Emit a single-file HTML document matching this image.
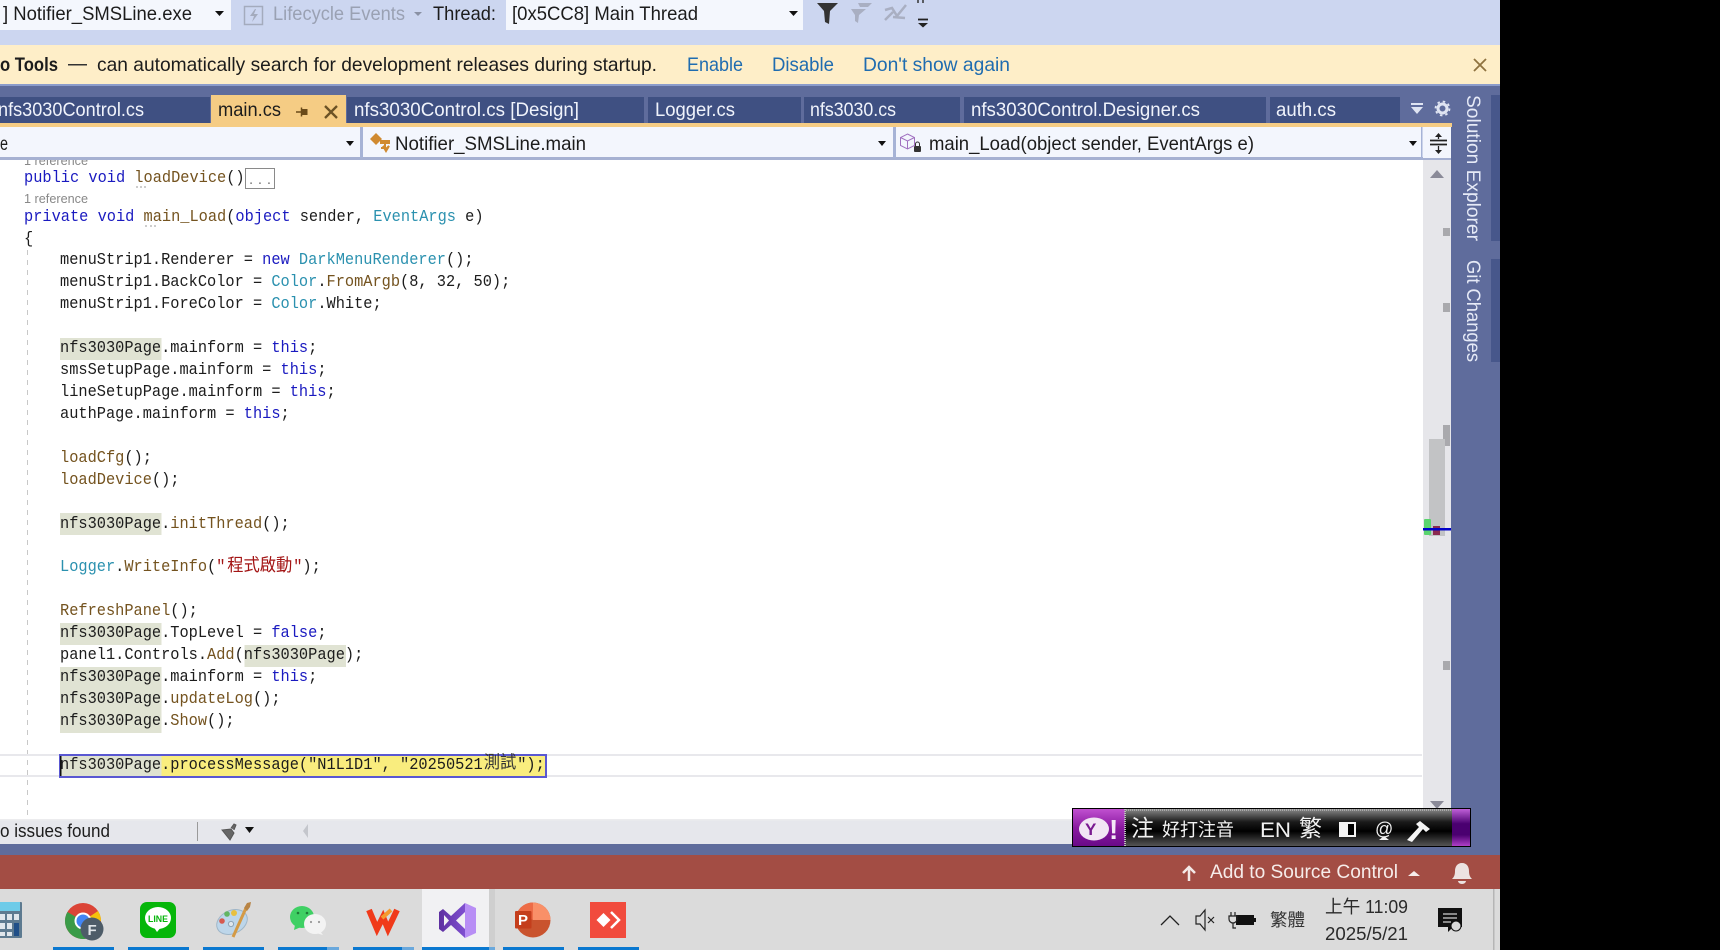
<!DOCTYPE html>
<html><head><meta charset="utf-8"><title>Visual Studio</title>
<style>
html,body{margin:0;padding:0;background:#000;width:1720px;height:950px;overflow:hidden}
svg{display:block}
text{font-family:"Liberation Sans","Noto Sans CJK TC",sans-serif;white-space:pre}
.ui{font-size:19.5px;fill:#1c1c1c}
.tab{font-size:19.5px;fill:#f0f3fb}
.c{fill:#1c1c1c}
.c text{font-family:"Liberation Mono","Noto Sans CJK TC",monospace;font-size:16.5px}
.c .cjk{font-family:"Noto Sans CJK TC",sans-serif;font-size:17.5px}
.k{fill:#1a1ac0}.m{fill:#74531f}.t{fill:#2b91af}.s{fill:#a31515}.d{fill:#1c1c1c}
.lnk{font-size:19.5px;fill:#1f6cb0}
</style></head><body>
<svg width="1720" height="950" viewBox="0 0 1720 950" xmlns="http://www.w3.org/2000/svg">
<defs>
<linearGradient id="bar" x1="0" y1="0" x2="0" y2="1"><stop offset="0" stop-color="#8a8a8a"/><stop offset=".35" stop-color="#1a1a1a"/><stop offset=".6" stop-color="#000"/><stop offset="1" stop-color="#555"/></linearGradient>
<linearGradient id="pur" x1="0" y1="0" x2="0" y2="1"><stop offset="0" stop-color="#c050d0"/><stop offset=".5" stop-color="#8a1aa0"/><stop offset="1" stop-color="#6a0a88"/></linearGradient>
<linearGradient id="pur2" x1="0" y1="0" x2="0" y2="1"><stop offset="0" stop-color="#c060d8"/><stop offset=".4" stop-color="#4a0070"/><stop offset=".7" stop-color="#4a0070"/><stop offset="1" stop-color="#b040c8"/></linearGradient>
<linearGradient id="vs" gradientUnits="userSpaceOnUse" x1="439" y1="0" x2="476" y2="0"><stop offset="0" stop-color="#5d2fa0"/><stop offset=".7" stop-color="#7f4fd0"/><stop offset=".7" stop-color="#b88ef5"/><stop offset="1" stop-color="#b88ef5"/></linearGradient>
</defs>
<rect width="1720" height="950" fill="#000"/>

<!-- editor -->
<rect x="0" y="150" width="1423" height="670" fill="#fff"/>
<text x="24" y="165" font-size="12.5" fill="#888" textLength="64" lengthAdjust="spacingAndGlyphs">1 reference</text>
<text x="24" y="203" font-size="12.5" fill="#888" textLength="64" lengthAdjust="spacingAndGlyphs">1 reference</text>
<line x1="27.5" y1="250" x2="27.5" y2="815" stroke="#c8c8c8" stroke-width="1" stroke-dasharray="5 5"/>
<rect x="0" y="754" width="1422" height="2" fill="#e8e8ec"/>
<rect x="0" y="775" width="1422" height="2" fill="#e8e8ec"/>
<!-- highlights -->
<g fill="#e0e3d3">
<rect x="60" y="338" width="101.5" height="22"/>
<rect x="60" y="513" width="101.5" height="22"/>
<rect x="60" y="623" width="101.5" height="22"/>
<rect x="244.500" y="645" width="101.5" height="22"/>
<rect x="60" y="667" width="101.5" height="66"/>
</g>
<rect x="161" y="755" width="385" height="22" fill="#f9ed7e"/>
<rect x="60" y="755" width="101.500" height="22" fill="#dfe2d0"/>
<rect x="60" y="755" width="486" height="22" fill="none" stroke="#5a58d2" stroke-width="2"/>
<rect x="60" y="756" width="1.5" height="20" fill="#111"/>
<!-- collapsed box -->
<rect x="245.500" y="168.500" width="29" height="20" fill="#fff" stroke="#8a8a8a"/>
<text x="249" y="184" font-family="Liberation Mono" font-size="15" fill="#777" textLength="22">...</text>
<g fill="#aaa"><circle cx="137" cy="187" r=".9"/><circle cx="141" cy="187" r=".9"/><circle cx="145" cy="187" r=".9"/><circle cx="146" cy="226" r=".9"/><circle cx="151" cy="226" r=".9"/><circle cx="155" cy="226" r=".9"/></g>

<!-- code -->
<g class="c" transform="translate(60,-1) scale(.9293,1)">
<text x="-38.7" y="183"><tspan class="k">public void </tspan><tspan class="m">loadDevice</tspan>()</text>
<text x="-38.7" y="222"><tspan class="k">private void </tspan><tspan class="m">main_Load</tspan>(<tspan class="k">object</tspan> sender, <tspan class="t">EventArgs</tspan> e)</text>
<text x="-38.7" y="244">{</text>
<text x="0" y="265">menuStrip1.Renderer = <tspan class="k">new</tspan> <tspan class="t">DarkMenuRenderer</tspan>();</text>
<text x="0" y="287">menuStrip1.BackColor = <tspan class="t">Color</tspan>.<tspan class="m">FromArgb</tspan>(8, 32, 50);</text>
<text x="0" y="309">menuStrip1.ForeColor = <tspan class="t">Color</tspan>.White;</text>
<text x="0" y="353">nfs3030Page.mainform = <tspan class="k">this</tspan>;</text>
<text x="0" y="375">smsSetupPage.mainform = <tspan class="k">this</tspan>;</text>
<text x="0" y="397">lineSetupPage.mainform = <tspan class="k">this</tspan>;</text>
<text x="0" y="419">authPage.mainform = <tspan class="k">this</tspan>;</text>
<text x="0" y="463"><tspan class="m">loadCfg</tspan>();</text>
<text x="0" y="485"><tspan class="m">loadDevice</tspan>();</text>
<text x="0" y="529">nfs3030Page.<tspan class="m">initThread</tspan>();</text>
<text x="0" y="572"><tspan class="t">Logger</tspan>.<tspan class="m">WriteInfo</tspan>(<tspan class="s">"</tspan></text>
<text x="180" y="572" class="cjk s">程式啟動</text>
<text x="251" y="572"><tspan class="s">"</tspan>);</text>
<text x="0" y="616"><tspan class="m">RefreshPanel</tspan>();</text>
<text x="0" y="638">nfs3030Page.TopLevel = <tspan class="k">false</tspan>;</text>
<text x="0" y="660">panel1.Controls.<tspan class="m">Add</tspan>(nfs3030Page);</text>
<text x="0" y="682">nfs3030Page.mainform = <tspan class="k">this</tspan>;</text>
<text x="0" y="704">nfs3030Page.<tspan class="m">updateLog</tspan>();</text>
<text x="0" y="726">nfs3030Page.<tspan class="m">Show</tspan>();</text>
<text x="0" y="770">nfs3030Page.processMessage("N1L1D1", "20250521</text>
<text x="456" y="769" class="cjk" fill="#333">測試</text>
<text x="492" y="770">");</text>
</g>

<!-- scrollbar -->
<rect x="1423" y="160" width="28" height="660" fill="#e6e6ea"/>
<path d="M1430 178 L1437 170 L1444 178Z" fill="#8a8a98"/>
<path d="M1430 801 L1437 809 L1444 801Z" fill="#8a8a98"/>
<g fill="#a9a9ad">
<rect x="1443" y="228" width="7" height="8"/>
<rect x="1443" y="303" width="7" height="9"/>
<rect x="1443" y="425" width="7" height="21"/>
<rect x="1443" y="661" width="7" height="9"/>
</g>
<rect x="1429" y="439" width="16" height="97" fill="#c2c3c5"/>
<rect x="1424" y="519" width="7" height="16" rx="1" fill="#5ad46e"/>
<rect x="1433" y="526" width="7" height="9" fill="#8b2a50"/>
<rect x="1423" y="528" width="28" height="2.500" fill="#0000c8"/>

<!-- right panel -->
<rect x="1451" y="84" width="49" height="805" fill="#5f6c9c"/>
<rect x="1491" y="95" width="9" height="146" fill="#47578b"/>
<rect x="1491" y="259" width="9" height="103" fill="#47578b"/>
<text transform="translate(1467,95) rotate(90)" font-size="19" fill="#e6eaf7" textLength="146" lengthAdjust="spacingAndGlyphs">Solution Explorer</text>
<text transform="translate(1467,260) rotate(90)" font-size="19" fill="#e6eaf7" textLength="102" lengthAdjust="spacingAndGlyphs">Git Changes</text>

<!-- toolbar -->
<rect x="0" y="0" width="1500" height="45" fill="#ccd6f0"/>
<rect x="0" y="0" width="231" height="30" fill="#f4f7fd"/>
<text class="ui" x="3" y="20" textLength="189" lengthAdjust="spacingAndGlyphs">] Notifier_SMSLine.exe</text>
<path d="M215 11h9l-4.500 5z" fill="#111"/>
<rect x="244.500" y="6.500" width="18" height="18" fill="none" stroke="#a4abbd" stroke-width="1.500"/>
<path d="M255 9l-5 7h4l-2 6 6-8h-4l2-5z" fill="#a4abbd"/>
<text class="ui" x="273" y="20" style="fill:#9aa1b3" textLength="132" lengthAdjust="spacingAndGlyphs">Lifecycle Events</text>
<path d="M414 12h8l-4 4z" fill="#8a91a4"/>
<text class="ui" x="433" y="20" textLength="63" lengthAdjust="spacingAndGlyphs">Thread:</text>
<rect x="506" y="0" width="297" height="30" fill="#f4f7fd"/>
<text class="ui" x="512" y="20" textLength="186" lengthAdjust="spacingAndGlyphs">[0x5CC8] Main Thread</text>
<path d="M789 11h9l-4.500 5z" fill="#111"/>
<path d="M817 3H838L830 11 829 24 825 22 824 11Z" fill="#333"/>
<path d="M851 9H866L859 15 858 23 855 21 855 15ZM858 3H872L868 7H860Z" fill="#a9afc2"/>
<path d="M885 10L892 8 897 16 906 5M885 20L893 12M893 17L905 18" fill="none" stroke="#a9afc2" stroke-width="2.500"/>
<path d="M918 0v3M923 0v3" stroke="#333" stroke-width="1.500"/>
<path d="M918 19.500h10" stroke="#222" stroke-width="1.800"/><path d="M918 23h10l-5 4.500z" fill="#222"/>

<!-- info banner -->
<rect x="0" y="45" width="1500" height="39" fill="#feeec8"/>
<text x="0" y="71" font-size="19.500" font-weight="bold" fill="#1c1c1c" textLength="58" lengthAdjust="spacingAndGlyphs">o Tools</text>
<rect x="68" y="64" width="19" height="1.500" fill="#333"/>
<text class="ui" x="97" y="71" textLength="560" lengthAdjust="spacingAndGlyphs">can automatically search for development releases during startup.</text>
<text class="lnk" x="687" y="71" textLength="56" lengthAdjust="spacingAndGlyphs">Enable</text>
<text class="lnk" x="772" y="71" textLength="62" lengthAdjust="spacingAndGlyphs">Disable</text>
<text class="lnk" x="863" y="71" textLength="147" lengthAdjust="spacingAndGlyphs">Don't show again</text>
<path d="M1474 59l12 12M1486 59l-12 12" stroke="#8f7340" stroke-width="1.800"/>

<!-- tabs -->
<rect x="0" y="84" width="1451" height="43" fill="#5f6c9c"/>
<rect x="0" y="84" width="1500" height="2" fill="#8c9ccb"/>
<g fill="#3f5082">
<rect x="0" y="97" width="210" height="26"/>
<rect x="347" y="97" width="297" height="26"/>
<rect x="648" y="97" width="153" height="26"/>
<rect x="804" y="97" width="156" height="26"/>
<rect x="964" y="97" width="302" height="26"/>
<rect x="1270" y="97" width="130" height="26"/>
</g>
<rect x="0" y="123" width="1452" height="4" fill="#f5cc84"/>
<rect x="211" y="95" width="135" height="32" fill="#f5cc84"/>
<text class="ui" x="218" y="116" textLength="63" lengthAdjust="spacingAndGlyphs">main.cs</text>
<text class="tab" x="-2" y="116" textLength="146" lengthAdjust="spacingAndGlyphs">nfs3030Control.cs</text>
<path d="M296 112h6M301.500 107.500v9" fill="none" stroke="#6a4a18" stroke-width="1.500"/>
<rect x="302" y="109" width="5.500" height="6" fill="#6a4a18"/>
<path d="M325 106l12 12M337 106l-12 12" stroke="#6b5225" stroke-width="2.300"/>
<text class="tab" x="354" y="116" textLength="225" lengthAdjust="spacingAndGlyphs">nfs3030Control.cs [Design]</text>
<text class="tab" x="655" y="116" textLength="80" lengthAdjust="spacingAndGlyphs">Logger.cs</text>
<text class="tab" x="810" y="116" textLength="86" lengthAdjust="spacingAndGlyphs">nfs3030.cs</text>
<text class="tab" x="971" y="116" textLength="229" lengthAdjust="spacingAndGlyphs">nfs3030Control.Designer.cs</text>
<text class="tab" x="1276" y="116" textLength="60" lengthAdjust="spacingAndGlyphs">auth.cs</text>
<path d="M1411 103h12v2h-12zM1411 107h12l-6 7z" fill="#dfe4f2"/>
<circle cx="1442.500" cy="108.500" r="4.500" fill="none" stroke="#dfe4f2" stroke-width="3"/>
<circle cx="1442.500" cy="108.500" r="7" fill="none" stroke="#dfe4f2" stroke-width="1.800" stroke-dasharray="2.500 3"/>

<!-- nav bars -->
<rect x="0" y="127" width="1423" height="30" fill="#f3f6fd"/>
<rect x="1423" y="127" width="28" height="33" fill="#f3f6fd"/>
<rect x="0" y="157" width="1423" height="3" fill="#a6b1d2"/>
<rect x="1423" y="158" width="28" height="2" fill="#a6b1d2"/>
<rect x="360" y="127" width="3" height="31" fill="#a6b3d6"/>
<rect x="893" y="127" width="3" height="31" fill="#a6b3d6"/>
<rect x="1421" y="127" width="1.500" height="33" fill="#a6b3d6"/>
<text class="ui" x="0" y="150" textLength="8" lengthAdjust="spacingAndGlyphs">e</text>
<path d="M346 141h8l-4 5z" fill="#111"/>
<path d="M878 141h8l-4 5z" fill="#111"/>
<path d="M1409 141h8l-4 5z" fill="#111"/>
<path d="M376 133l-6 6 6 6 6-6z" fill="#d08a30"/>
<path d="M381 141h8v2h-8zM385 143v5h-4M383 146l3 3 3-3 -3 5z" fill="none" stroke="#d08a30" stroke-width="2"/>
<text class="ui" x="395" y="150" textLength="191" lengthAdjust="spacingAndGlyphs">Notifier_SMSLine.main</text>
<path d="M907.500 134l7 3.500v8l-7 3.500-7-3.500v-8zM900.500 137.500l7 3.500 7-3.500M907.500 141v8" fill="none" stroke="#a070c0" stroke-width="1"/>
<rect x="914" y="146" width="7" height="6" rx="1" fill="#333"/>
<path d="M915.500 146v-2a2 2 0 0 1 4 0v2" fill="none" stroke="#333" stroke-width="1"/>
<text class="ui" x="929" y="150" textLength="325" lengthAdjust="spacingAndGlyphs">main_Load(object sender, EventArgs e)</text>
<path d="M1430 140.500h17M1430 144.500h17" stroke="#222" stroke-width="1.800"/>
<path d="M1438.500 135v4M1438.500 146v5" stroke="#222" stroke-width="1.300"/>
<path d="M1435 137l3.500-4 3.500 4zM1435 150l3.500 4 3.500-4z" fill="#222"/>

<!-- status bar -->
<rect x="0" y="819" width="1451" height="25" fill="#e6e7ec"/>
<rect x="0" y="819" width="1423" height="1.500" fill="#ececee"/>
<text class="ui" x="0" y="837" style="font-size:18.500px" textLength="110" lengthAdjust="spacingAndGlyphs">o issues found</text>
<rect x="197" y="822" width="1" height="19" fill="#9a9a9a"/>
<path d="M222 830l8 10 4-7-3-4zM231 828l3-4 2 1-2 5" fill="#666" stroke="#555"/>
<path d="M245 827h9l-4.500 6z" fill="#111"/>
<path d="M308 824v14l-5-7z" fill="#c4c6cc"/>
<rect x="0" y="844" width="1500" height="12" fill="#5f6c9c"/>
<rect x="0" y="855" width="1500" height="34" fill="#a34d44"/>
<path d="M1189 881v-13M1183 873l6-6 6 6" fill="none" stroke="#f3e9e7" stroke-width="2.500"/>
<text x="1210" y="878" font-size="19.500" fill="#f6ecea" textLength="188" lengthAdjust="spacingAndGlyphs">Add to Source Control</text>
<path d="M1408 876l6-5 6 5z" fill="#f6ecea"/>
<path d="M1462 863c-5 0-7 4-7 8 0 4-1 6-3 8h20c-2-2-3-4-3-8 0-4-2-8-7-8zM1458 881h8a4 3 0 0 1-8 0z" fill="#ece3e1"/>

<!-- Yahoo bar -->
<rect x="1072" y="808" width="399" height="39" fill="#000"/>
<rect x="1073" y="809" width="397" height="37" fill="url(#bar)"/>
<path d="M1126 810H1451" stroke="#aaa" stroke-width="2" stroke-dasharray="1 1"/>
<rect x="1073" y="809" width="52" height="37" fill="url(#pur)"/>
<path d="M1125 809V846" stroke="#bbb" stroke-width="2" stroke-dasharray="1 1"/>
<ellipse cx="1094" cy="829" rx="15" ry="11.500" fill="#f2e6f4"/>
<text x="1085" y="835" font-family="Liberation Serif" font-weight="bold" font-size="17" fill="#7a1a90">Y</text>
<text x="1109" y="839" font-family="Liberation Serif" font-weight="bold" font-size="28" fill="#f4e8f6">!</text>
<rect x="1452" y="809" width="18" height="37" fill="url(#pur2)"/>
<text x="1131" y="836" font-size="23" fill="#f2f2f2">注</text>
<text x="1162" y="836" font-size="18" fill="#f2f2f2" textLength="72">好打注音</text>
<text x="1260" y="837" font-size="21" fill="#f2f2f2" textLength="31" lengthAdjust="spacingAndGlyphs">EN</text>
<text x="1299" y="836" font-size="23" fill="#f2f2f2">繁</text>
<rect x="1339" y="822" width="17" height="15" fill="#f5f5f5"/><rect x="1348" y="824" width="6" height="11" fill="#000"/>
<text x="1375" y="835" font-size="18" fill="#f2f2f2">@</text>
<path d="M1379 840h10l-5-4z" fill="#f2f2f2"/>
<path d="M1407 840l12-13-3-3 4-3 10 8-4 3-3-3-11 13z" fill="#f5f5f5"/>

<!-- taskbar -->
<rect x="0" y="889" width="1500" height="61" fill="#dbdbdb"/>
<rect x="1493" y="889" width="1.500" height="61" fill="#b5b5b5"/>
<rect x="422" y="889" width="67" height="61" fill="#f1f1f3"/>
<rect x="489" y="889" width="6" height="61" fill="#cfcfcf"/>
<g fill="#0a78d0">
<rect x="53" y="947" width="61" height="3"/>
<rect x="128" y="947" width="61" height="3"/>
<rect x="203" y="947" width="61" height="3"/>
<rect x="278" y="947" width="49" height="3"/><rect x="327" y="947" width="12" height="3" fill="#6aa8dc"/>
<rect x="353" y="947" width="49" height="3"/><rect x="402" y="947" width="12" height="3" fill="#6aa8dc"/>
<rect x="422" y="947" width="67" height="3"/><rect x="489" y="947" width="6" height="3" fill="#6aa8dc"/>
<rect x="503" y="947" width="61" height="3"/>
<rect x="578" y="947" width="61" height="3"/>
</g>
<!-- calculator -->
<rect x="-6" y="902" width="28" height="36" rx="1" fill="#5d7a90"/>
<rect x="-6" y="902" width="26" height="9" fill="#6ecbe8"/>
<g fill="#dfe6ec"><rect x="0" y="914" width="5" height="6"/><rect x="7" y="914" width="5" height="6"/><rect x="14" y="914" width="5" height="6"/><rect x="0" y="923" width="5" height="6"/><rect x="7" y="923" width="5" height="6"/><rect x="0" y="932" width="5" height="4"/><rect x="7" y="932" width="5" height="4"/></g>
<rect x="14" y="923" width="5" height="13" fill="#1f4f88"/>
<!-- chrome -->
<circle cx="83" cy="921" r="18" fill="#db4437"/>
<path d="M83 921L67.400 930A18 18 0 0 1 67.400 912z" fill="#3a9b48"/>
<path d="M83 921L92 936.600A18 18 0 0 1 67.400 930z" fill="#3a9b48"/>
<path d="M83 921h18A18 18 0 0 0 98 911z" fill="#f4c20d"/>
<circle cx="83" cy="921" r="8.500" fill="#fff"/><circle cx="83" cy="921" r="6.500" fill="#4285f4"/>
<circle cx="92" cy="929" r="11.500" fill="#4d5c68"/>
<text x="87.500" y="935" font-size="15" font-weight="bold" fill="#dfe4e8">F</text>
<!-- LINE -->
<rect x="140" y="902" width="36" height="36" rx="7" fill="#06b60a"/>
<ellipse cx="158" cy="918" rx="13" ry="11" fill="#fff"/>
<path d="M153 926l4 6 5-6z" fill="#fff"/>
<text x="148" y="922" font-size="9.500" font-weight="bold" fill="#06b60a" textLength="20" lengthAdjust="spacingAndGlyphs">LINE</text>
<!-- paint -->
<ellipse cx="232" cy="922" rx="16" ry="11.500" transform="rotate(-25 232 922)" fill="#bdd6ea" stroke="#9fb6c8"/>
<circle cx="222" cy="921" r="2.800" fill="#d65a50"/><circle cx="227" cy="914" r="2.800" fill="#62b562"/><circle cx="234" cy="913" r="3" fill="#e8c040"/><circle cx="231" cy="924" r="2.600" fill="#dfe7ee" stroke="#8fa5b8"/>
<path d="M233 937l13-29" stroke="#d49a45" stroke-width="3"/>
<path d="M244 908l3-5 4-1-1 5-3 4z" fill="#b88445"/>
<!-- wechat -->
<ellipse cx="302" cy="917" rx="12" ry="11" fill="#3fd064"/>
<path d="M295 925l-1 5 7-3z" fill="#3fd064"/>
<circle cx="298" cy="913" r="1.300" fill="#1f7a38"/><circle cx="307" cy="913" r="1.300" fill="#1f7a38"/>
<ellipse cx="315" cy="924" rx="11" ry="10" fill="#f3f3f3"/>
<path d="M320 931l3 4-7-2z" fill="#f3f3f3"/>
<circle cx="311" cy="922" r="1.100" fill="#999"/><circle cx="319" cy="922" r="1.100" fill="#999"/>
<!-- WPS -->
<path d="M369 910L377 929 383 917 388 929 397 910" fill="none" stroke="#f03a1a" stroke-width="6"/>
<path d="M382 918L391 910" stroke="#f59a2e" stroke-width="4"/>
<!-- VS -->
<path fill-rule="evenodd" d="M465 903L476 908V933L465 938 451 925 443 932 439 929V912L443 909 451 916ZM465 912L456 920.500 465 929ZM444 915V926L449 920.500Z" fill="url(#vs)"/>
<!-- PPT -->
<circle cx="533" cy="920" r="17.500" fill="#c9532e"/>
<path d="M533 920H550.500A17.500 17.500 0 0 0 533 902.500z" fill="#f99068"/>
<path d="M533 920V902.500A17.500 17.500 0 0 0 517 913z" fill="#ed6c47"/>
<rect x="515" y="911" width="16.500" height="17.500" rx="1" fill="#c43e1c"/>
<text x="518" y="925" font-size="15" font-weight="bold" fill="#fff">P</text>
<!-- AnyDesk -->
<rect x="590" y="902" width="36" height="36" fill="#f14b3d"/>
<path d="M603.500 913l7 7-7 7-7-7z" fill="#fff"/>
<path d="M611 912l8 8-8 8" fill="none" stroke="#fff" stroke-width="2.500"/>

<!-- tray -->
<path d="M1161 925l9-9 9 9" fill="none" stroke="#222" stroke-width="1.300"/>
<path d="M1196 916h4l5-6v20l-5-6h-4z" fill="none" stroke="#222" stroke-width="1.200"/>
<path d="M1208 917l6 6M1214 917l-6 6" stroke="#222" stroke-width="1.200"/>
<rect x="1236" y="915" width="18" height="10" fill="#111"/><rect x="1254" y="918" width="2" height="4" fill="#111"/>
<path d="M1231 912v4M1235 912v4M1229 916h8v3a4 4 0 0 1-8 0zM1233 923v5h3" fill="none" stroke="#222" stroke-width="1.200"/>
<text x="1270" y="926" font-size="17.500" fill="#333" textLength="35">繁體</text>
<text x="1325" y="913" font-size="18" fill="#2a2a2a" textLength="83" lengthAdjust="spacingAndGlyphs">上午 11:09</text>
<text x="1325" y="940" font-size="18" fill="#2a2a2a" textLength="83" lengthAdjust="spacingAndGlyphs">2025/5/21</text>
<path d="M1438 908h24v19h-9l-5 5v-5h-10z" fill="#111"/>
<path d="M1443 914h14M1443 918h14M1443 922h8" stroke="#fff" stroke-width="1"/>
<circle cx="1456" cy="926" r="5" fill="#dbdbdb" stroke="#111"/>

<rect x="1500" y="0" width="220" height="950" fill="#000"/>
</svg>
</body></html>
